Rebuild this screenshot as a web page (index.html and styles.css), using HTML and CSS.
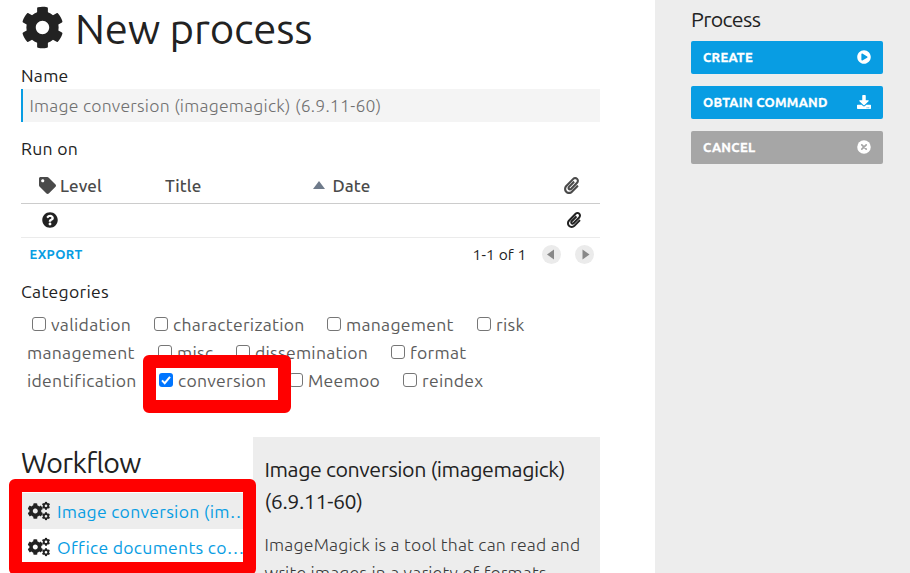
FILE: index.html
```html
<!DOCTYPE html>
<html lang="en">
<head>
<meta charset="utf-8">
<title>New process</title>
<link rel="stylesheet" href="styles.css">
</head>
<body>
<svg class="defs" aria-hidden="true">
  <symbol id="cog" viewBox="0 0 512 512"><path d="M487.4 315.7l-42.6-24.6c4.3-23.2 4.3-47 0-70.2l42.6-24.6c4.9-2.8 7.1-8.6 5.5-14-11.1-35.6-30-67.8-54.7-94.6-3.8-4.1-10-5.1-14.8-2.3L380.8 110c-17.9-15.4-38.5-27.3-60.8-35.1V25.8c0-5.6-3.9-10.5-9.4-11.7-36.7-8.2-74.3-7.8-109.2 0-5.5 1.2-9.4 6.1-9.4 11.7V75c-22.2 7.9-42.8 19.8-60.8 35.1L88.7 85.5c-4.9-2.8-11-1.9-14.8 2.3-24.7 26.7-43.6 58.9-54.7 94.6-1.7 5.4.6 11.2 5.5 14L67.3 221c-4.3 23.2-4.3 47 0 70.2l-42.6 24.6c-4.9 2.8-7.1 8.6-5.5 14 11.1 35.6 30 67.8 54.7 94.6 3.8 4.1 10 5.1 14.8 2.3l42.6-24.6c17.9 15.4 38.5 27.3 60.8 35.1v49.2c0 5.6 3.9 10.5 9.4 11.7 36.7 8.2 74.3 7.8 109.2 0 5.5-1.2 9.4-6.1 9.4-11.7v-49.2c22.2-7.9 42.8-19.8 60.8-35.1l42.6 24.6c4.9 2.8 11 1.9 14.8-2.3 24.7-26.7 43.6-58.9 54.7-94.6 1.5-5.5-.7-11.3-5.6-14.1zM256 336c-44.1 0-80-35.9-80-80s35.9-80 80-80 80 35.9 80 80-35.9 80-80 80z"/></symbol>
  <symbol id="cogs" viewBox="0 0 24 20">
    <use href="#cog" x="0.3" y="2" width="16" height="16"/>
    <use href="#cog" x="14.8" y="0.6" width="8.4" height="8.4"/>
    <use href="#cog" x="14.8" y="11" width="8.4" height="8.4"/>
  </symbol>
  <symbol id="clip" viewBox="0 0 448 512"><path d="M43.246 466.142c-58.43-60.289-57.341-157.511 1.386-217.581L254.392 34c44.316-45.332 116.351-45.336 160.671 0 43.89 44.894 43.943 117.329 0 162.276L232.214 383.128c-29.855 30.537-78.633 30.111-107.982-.998-28.275-29.97-27.368-77.473 1.452-106.953l143.743-146.835c6.182-6.314 16.312-6.422 22.626-.241l22.861 22.379c6.315 6.182 6.422 16.312.241 22.626L171.427 319.927c-4.932 5.045-5.236 13.428-.648 18.292 4.372 4.634 11.245 4.711 15.688.165l182.849-186.851c19.613-20.062 19.613-52.725-.011-72.798-19.189-19.627-49.957-19.637-69.154 0L90.39 293.295c-34.763 35.56-35.299 93.12-1.191 128.313 34.01 35.093 88.985 35.137 123.058.286l172.06-175.999c6.177-6.319 16.307-6.433 22.626-.256l22.877 22.364c6.319 6.177 6.434 16.307.256 22.626l-172.06 175.998c-59.576 60.938-155.943 60.216-214.77-.485z"/></symbol>
</svg>

<main class="content">
  <h1 class="title"><svg class="title-icon"><use href="#cog"/></svg><span>New process</span></h1>

  <div class="label label-name">Name</div>
  <div class="input">Image conversion (imagemagick) (6.9.11-60)</div>

  <div class="label label-run">Run on</div>
  <div class="table">
    <div class="tr head">
      <span class="level"><svg class="tag" viewBox="0 0 512 512"><path d="M0 252.118V48C0 21.49 21.49 0 48 0h204.118a48 48 0 0 1 33.941 14.059l211.882 211.882c18.745 18.745 18.745 49.137 0 67.882L293.823 497.941c-18.745 18.745-49.137 18.745-67.882 0L14.059 286.059A48 48 0 0 1 0 252.118zM112 64c-26.51 0-48 21.49-48 48s21.49 48 48 48 48-21.49 48-48-21.49-48-48-48z"/></svg>Level</span>
      <span>Title</span>
      <svg class="sort" viewBox="0 0 12 8"><path d="M6 0l6 8H0z"/></svg>
      <span>Date</span>
      <svg class="clip"><use href="#clip"/></svg>
    </div>
    <div class="tr row">
      <svg class="question" viewBox="0 0 512 512"><path d="M504 256c0 136.997-111.043 248-248 248S8 392.997 8 256C8 119.083 119.043 8 256 8s248 111.083 248 248zM262.655 90c-54.497 0-89.255 22.957-116.549 63.758-3.536 5.286-2.353 12.415 2.715 16.258l34.699 26.31c5.205 3.947 12.621 3.008 16.665-2.122 17.864-22.658 30.113-35.797 57.303-35.797 20.429 0 45.698 13.148 45.698 32.958 0 14.976-12.363 22.667-32.534 33.976C247.128 238.528 216 254.941 216 296v4c0 6.627 5.373 12 12 12h56c6.627 0 12-5.373 12-12v-1.333c0-28.462 83.186-29.647 83.186-106.667 0-58.002-60.165-102-116.531-102zM256 338c-25.365 0-46 20.635-46 46 0 25.364 20.635 46 46 46s46-20.636 46-46c0-25.365-20.635-46-46-46z"/></svg>
      <svg class="clip"><use href="#clip"/></svg>
    </div>
    <div class="foot">
      <a class="export">EXPORT</a>
      <span class="count">1-1 of 1</span>
      <span class="pager"><svg viewBox="0 0 19 19"><path d="M5 9.5l7-5v10z"/></svg></span>
      <span class="pager"><svg viewBox="0 0 19 19"><path d="M14.5 9.5l-7-5v10z"/></svg></span>
    </div>
  </div>

  <div class="label label-cat">Categories</div>
  <div class="cats">
    <div class="cat-row first">
      <label><i class="box"></i>validation</label>
      <label><i class="box"></i>characterization</label>
      <label><i class="box"></i>management</label>
      <label><i class="box"></i>risk</label>
    </div>
    <div class="cat-row second">
      <span>management</span>
      <label><i class="box"></i>misc</label>
      <label><i class="box"></i>dissemination</label>
      <label><i class="box"></i>format</label>
    </div>
    <div class="cat-row third">
      <span>identification</span>
      <label class="marked"><i class="box checked"><svg viewBox="0 0 14 14"><path d="M3 7.4l2.7 2.8L11 3.8"/></svg></i>conversion</label>
      <label><i class="box"></i>Meemoo</label>
      <label><i class="box"></i>reindex</label>
    </div>
  </div>

  <div class="workflow">
    <div class="left">
      <h2>Workflow</h2>
      <div class="list">
        <a class="item active"><svg class="cogs"><use href="#cogs"/></svg><span>Image conversion (im…</span></a>
        <a class="item"><svg class="cogs"><use href="#cogs"/></svg><span>Office documents co…</span></a>
      </div>
    </div>
    <div class="panel">
      <h3>Image conversion (imagemagick)<br>(6.9.11-60)</h3>
      <p>ImageMagick is a tool that can read and<br>write images in a variety of formats</p>
    </div>
  </div>
</main>

<aside class="side">
  <h4>Process</h4>
  <div class="btn"><span>CREATE</span><svg viewBox="0 0 512 512"><path d="M256 8C119 8 8 119 8 256s111 248 248 248 248-111 248-248S393 8 256 8zm115.7 272l-176 101c-15.8 8.8-35.7-2.5-35.7-21V152c0-18.4 19.8-29.8 35.7-21l176 107c16.4 9.2 16.4 32.9 0 42z"/></svg></div>
  <div class="btn"><span>OBTAIN COMMAND</span><svg viewBox="0 0 512 512"><path d="M216 0h80c13.3 0 24 10.7 24 24v168h87.7c17.8 0 26.7 21.5 14.1 34.1L269.7 378.3c-7.5 7.5-19.8 7.5-27.3 0L90.1 226.1c-12.6-12.6-3.7-34.1 14.1-34.1H192V24c0-13.3 10.7-24 24-24zm296 376v112c0 13.3-10.7 24-24 24H24c-13.3 0-24-10.7-24-24V376c0-13.3 10.7-24 24-24h146.7l49 49c20.1 20.1 52.5 20.1 72.6 0l49-49H488c13.3 0 24 10.7 24 24zm-124 88c0-11-9-20-20-20s-20 9-20 20 9 20 20 20 20-9 20-20zm64 0c0-11-9-20-20-20s-20 9-20 20 9 20 20 20 20-9 20-20z"/></svg></div>
  <div class="btn cancel"><span>CANCEL</span><svg viewBox="0 0 512 512"><circle cx="256" cy="256" r="248"/><path class="cross" d="M175 175l162 162M337 175L175 337"/></svg></div>
</aside>
</body>
</html>
```

FILE: styles.css
```css
*, *::after { box-sizing: border-box; }
body {
  margin: 0;
  width: 910px;
  height: 573px;
  overflow: hidden;
  display: flex;
  background: #fff;
  color: #222;
  font: 17.6px/28px Ubuntu, "Noto Sans", sans-serif;
  letter-spacing: .27px;
  white-space: nowrap;
}
svg { display: block; flex: none; fill: currentColor; }
.defs { position: absolute; width: 0; height: 0; }
h1, h2, h3, h4, p { margin: 0; font-weight: 400; }

.content { width: 655px; padding: 0 55px 0 21px; flex: none; }
.title { display: flex; height: 57px; line-height: 57px; font-size: 42px; letter-spacing: -.2px; }
.title-icon { width: 43px; height: 43px; margin: 6px 11px 0 0; }

.label { height: 23px; line-height: 23px; }
.label-name { margin: 7px 0 2px; }
.label-run { margin-top: 15px; }
.label-cat { margin-top: 9px; }
.input {
  height: 33px;
  line-height: 33px;
  padding-left: 6.5px;
  border-left: 2px solid #089de3;
  background: #f4f4f4;
  color: #707070;
  font-weight: 300;
  letter-spacing: .24px;
}

.table { margin-top: 8px; }
.tr { display: grid; align-items: center; }
.head {
  grid-template-columns: 126px 147.5px 20px 231.5px auto;
  height: 36px;
  padding-left: 18px;
  border-bottom: 1px solid #ccc;
  color: #4a4a4a;
  font-size: 17px;
  font-weight: 500;
  letter-spacing: .1px;
}
.level { display: flex; align-items: center; gap: 4px; }
.tag { width: 17px; height: 17px; }
.sort { width: 12px; height: 8px; margin-bottom: 2px; fill: #6f7b8b; }
.clip { width: 15px; height: 17px; }
.row {
  grid-template-columns: 525px auto;
  height: 34px;
  padding: 0 0 1px 20.5px;
  border-bottom: 1px solid #ebebeb;
}
.row .clip { width: 14px; height: 16px; }
.question { width: 16px; height: 16px; }
.foot { display: flex; align-items: center; height: 33px; padding: 0 6px 0 8.5px; }
.export { color: #089de3; font-size: 13px; font-weight: 700; letter-spacing: .3px; margin: 0 auto 2px 0; }
.count { font-size: 15.5px; letter-spacing: .15px; margin-right: 15.5px; }
.pager { width: 19px; height: 19px; border-radius: 50%; background: #ebebeb; color: #888; }
.pager + .pager { margin-left: 14px; }

.cats { margin-top: 8px; color: #5c5c5c; }
.cat-row { display: grid; height: 28px; padding-left: 6px; line-height: 28.5px; }
.first { grid-template-columns: 122px 173px 150px auto; padding-left: 11px; }
.second { grid-template-columns: 131px 78px 155px auto; }
.third { grid-template-columns: 132px 130px 114px auto; }
.cat-row label { display: flex; }
.box {
  width: 14px;
  height: 14px;
  margin: 6px 5px 0 0;
  flex: none;
  border: 1px solid #767676;
  border-radius: 3px;
  background: #fff;
}
.checked { border: 0; background: #0075ff; }
.checked svg { fill: none; stroke: #fff; stroke-width: 2; }
.marked { position: relative; z-index: 1; }
.marked::after {
  content: "";
  position: absolute;
  left: -16px;
  top: -12px;
  width: 148px;
  height: 58px;
  border: 13px solid #f00;
  border-radius: 6px;
}

.workflow { display: flex; height: 136px; margin-top: 42px; }
.left { width: 232px; flex: none; }
.left h2 { height: 56px; line-height: 50px; font-size: 28.5px; letter-spacing: -.65px; }
.list { position: relative; z-index: 1; width: 222px; }
.list::after {
  content: "";
  position: absolute;
  left: -12px;
  top: -14px;
  width: 247px;
  height: 96px;
  border: 13px solid #f00;
  border-radius: 6px;
}
.item { display: flex; align-items: center; height: 36px; padding-left: 6px; color: #089de3; }
.item span { line-height: 30px; padding-top: 2px; }
.active { background: #ededed; }
.cogs { width: 24px; height: 20px; margin-right: 6px; color: #222; }
.panel { flex: 1; padding: 16px 12px 0 11.5px; background: #ededed; overflow: hidden; }
.panel h3 { font-size: 21.4px; line-height: 32px; letter-spacing: -.41px; }
.panel p { margin-top: 14px; font-weight: 300; color: #3a3a3a; letter-spacing: .23px; }

.side { flex: 1; padding: 3px 27px 0 36px; background: #ededed; }
.side h4 { height: 38px; line-height: 33px; font-size: 21.4px; letter-spacing: -.6px; }
.btn {
  display: flex;
  align-items: center;
  justify-content: space-between;
  height: 33px;
  margin-bottom: 12px;
  padding: 0 12px;
  border-radius: 2px;
  background: #089de3;
  color: #fff;
  font-size: 13px;
  font-weight: 700;
  letter-spacing: .27px;
  -webkit-text-stroke: .3px #fff;
}
.btn span { margin-bottom: 1px; }
.btn svg { width: 14px; height: 14px; margin-bottom: 2px; }
.cancel { background: #a6a6a6; }
.cross { stroke: #a6a6a6; stroke-width: 62; stroke-linecap: round; }
```
